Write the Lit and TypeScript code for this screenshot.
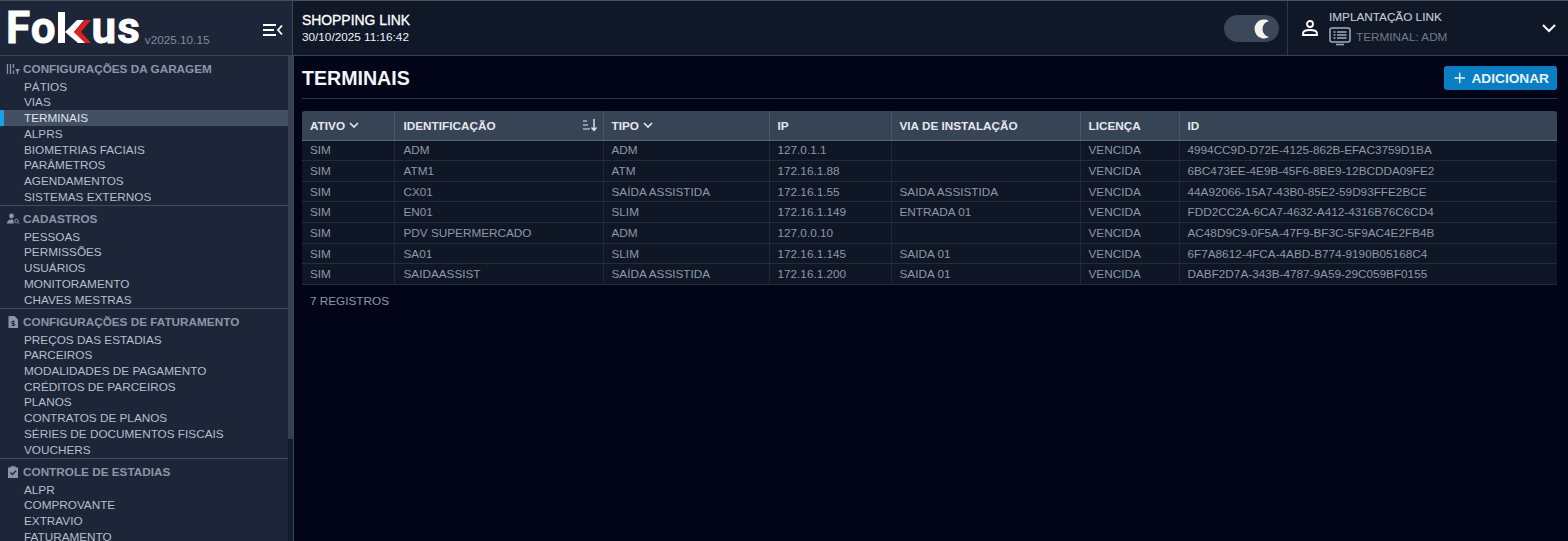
import { LitElement, html, css, svg } from "lit";
import { customElement } from "lit/decorators.js";

const chevron = html`<svg class="chev" viewBox="0 0 12 12" width="12" height="12"><path d="M2 4l4 4 4-4" fill="none" stroke="currentColor" stroke-width="1.6"/></svg>`;

const sections = [
  { title: "CONFIGURAÇÕES DA GARAGEM", icon: "tune", items: ["PÁTIOS", "VIAS", "TERMINAIS", "ALPRS", "BIOMETRIAS FACIAIS", "PARÂMETROS", "AGENDAMENTOS", "SISTEMAS EXTERNOS"] },
  { title: "CADASTROS", icon: "people", items: ["PESSOAS", "PERMISSÕES", "USUÁRIOS", "MONITORAMENTO", "CHAVES MESTRAS"] },
  { title: "CONFIGURAÇÕES DE FATURAMENTO", icon: "bill", items: ["PREÇOS DAS ESTADIAS", "PARCEIROS", "MODALIDADES DE PAGAMENTO", "CRÉDITOS DE PARCEIROS", "PLANOS", "CONTRATOS DE PLANOS", "SÉRIES DE DOCUMENTOS FISCAIS", "VOUCHERS"] },
  { title: "CONTROLE DE ESTADIAS", icon: "check", items: ["ALPR", "COMPROVANTE", "EXTRAVIO", "FATURAMENTO"] },
];

const icons: Record<string, unknown> = {
  tune: svg`<path d="M1.500 2v10M4.500 2v10" stroke="currentColor" stroke-width="1.300" fill="none"/><path d="M7.500 2v4M7.500 8.500V12" stroke="currentColor" stroke-width="1.300" fill="none"/><path d="M9 7h5l-2.500 3.500z" fill="currentColor"/><path d="M11.500 9v3" stroke="currentColor" stroke-width="1.300"/>`,
  people: svg`<circle cx="5.500" cy="4" r="2.400" fill="currentColor"/><path d="M1 11.500c0-2.600 2-3.900 4.500-3.900 .8 0 1.300.1 1.800.3-.2 1.200.1 2.600.9 3.600z" fill="currentColor"/><circle cx="10.500" cy="9" r="1.800" fill="none" stroke="currentColor" stroke-width="1"/><path d="M11.800 10.400l1.400 1.400" stroke="currentColor" stroke-width="1"/>`,
  bill: svg`<path d="M2.500 1h6l3.500 3.500V13h-9.500z" fill="currentColor"/><path d="M7.200 5.500v5.500M8.800 6.500H6.500a1 1 0 0 0 0 2h1.400a1 1 0 0 1 0 2H5.600" stroke="#1c2638" stroke-width="1" fill="none"/>`,
  check: svg`<path d="M2 2.500h2.500V1.300h5v1.200H12V13H2z" fill="currentColor"/><path d="M4.500 7.500l2 2 3.500-3.800" stroke="#1c2638" stroke-width="1.300" fill="none"/>`,
};

const rows = [
  ["SIM", "ADM", "ADM", "127.0.1.1", "", "VENCIDA", "4994CC9D-D72E-4125-862B-EFAC3759D1BA"],
  ["SIM", "ATM1", "ATM", "172.16.1.88", "", "VENCIDA", "6BC473EE-4E9B-45F6-8BE9-12BCDDA09FE2"],
  ["SIM", "CX01", "SAÍDA ASSISTIDA", "172.16.1.55", "SAIDA ASSISTIDA", "VENCIDA", "44A92066-15A7-43B0-85E2-59D93FFE2BCE"],
  ["SIM", "EN01", "SLIM", "172.16.1.149", "ENTRADA 01", "VENCIDA", "FDD2CC2A-6CA7-4632-A412-4316B76C6CD4"],
  ["SIM", "PDV SUPERMERCADO", "ADM", "127.0.0.10", "", "VENCIDA", "AC48D9C9-0F5A-47F9-BF3C-5F9AC4E2FB4B"],
  ["SIM", "SA01", "SLIM", "172.16.1.145", "SAIDA 01", "VENCIDA", "6F7A8612-4FCA-4ABD-B774-9190B05168C4"],
  ["SIM", "SAIDAASSIST", "SAÍDA ASSISTIDA", "172.16.1.200", "SAIDA 01", "VENCIDA", "DABF2D7A-343B-4787-9A59-29C059BF0155"],
];

@customElement("app-root")
export class AppRoot extends LitElement {
  static styles = css`
    :host { display: block; width: 1568px; height: 541px; overflow: hidden; background: #020518; font-family: "Liberation Sans", Arial, sans-serif; font-size: 11.76px; color: #a3aebd; }
    .top { display: flex; height: 56px; box-sizing: border-box; background: #101828; border-top: 1px solid #4a515c; border-bottom: 1px solid #3a424f; }
    .brand { width: 293px; flex: none; box-sizing: border-box; background: #1c2638; border-right: 1px solid #3c4655; display: flex; align-items: flex-start; padding: 5px 10px 0 6px; }
    .logo { display: flex; align-items: flex-start; color: #fff; font-family: Roboto, sans-serif; font-weight: 700; font-size: 44px; line-height: 44px; height: 44px; letter-spacing: 1px; -webkit-text-stroke: .8px #fff; }
    .logo svg { flex: none; margin-top: 6px; }
    .ver { color: #7f8a9a; font-size: 11.76px; margin: 27px 0 0 4px; }
    .menu { margin-left: auto; margin-top: 16px; margin-right: -1px; color: #fff; }
    .head-mid { flex: 1; box-sizing: border-box; padding: 11px 9px; color: #fff; display: flex; justify-content: space-between; align-items: flex-start; }
    .head-title { font-size: 13.9px; line-height: 16px; -webkit-text-stroke: .3px #fff; }
    .head-date { font-size: 11.76px; line-height: 15px; margin-top: 1px; color: #eef1f5; }
    .toggle { width: 55px; height: 27px; margin: 3px -1px 0 0; border-radius: 14px; background: #3b4658; display: flex; align-items: center; justify-content: flex-end; padding-right: 9px; box-sizing: border-box; }
    .user { width: 281px; flex: none; box-sizing: border-box; border-left: 1px solid #2e3643; display: flex; align-items: flex-start; padding: 9px 0 0 13px; }
    .user-ico { margin: 9px 10px 0 0; color: #fff; flex: none; }
    .user-name { color: #c6ccd5; line-height: 14px; -webkit-text-stroke: .1px; }
    .user-term { display: flex; align-items: center; gap: 5px; color: #717a88; line-height: 16px; margin-top: 3px; }
    .user-term svg { color: #a3aebd; }
    .user-chev { margin: 11px 0 0 auto; padding-right: 5px; color: #fff; }
    .body { display: flex; height: 485px; }
    .side { width: 294px; flex: none; display: flex; box-sizing: border-box; border-right: 1px solid #3c4655; background: #1c2638; overflow: hidden; }
    .nav { width: 288px; flex: none; }
    .scroll { width: 5px; flex: none; background: #141d2d; }
    .thumb { height: 383px; background: #343f53; }
    .sec { border-bottom: 1px solid #3f4a5b; padding: 5.3px 0 .7px; box-sizing: border-box; }
    .sec-h { display: flex; align-items: center; height: 15px; font-weight: 700; color: #8a96a8; padding-left: 6px; gap: 3px; margin-bottom: 2.5px; }
    .sec-h svg { flex: none; color: #8a96a8; }
    .item { height: 15.7px; line-height: 15.7px; padding-left: 24px; color: #b5bfcc; position: relative; }
    .item.on { background: #434f62; color: #dfe4ea; }
    .item.on::before { content: ""; position: absolute; left: 0; top: 0; bottom: 0; width: 4px; background: #14a3e8; }
    .main { flex: 1; padding: 0 11px 0 8px; min-width: 0; }
    .bar { display: flex; justify-content: space-between; align-items: flex-start; height: 43px; box-sizing: border-box; border-bottom: 1px solid #2e3645; }
    h1 { margin: 11px 0 0; font-size: 19.6px; line-height: 23px; font-weight: 700; color: #f3f5f8; }
    .add { margin-top: 10px; height: 24px; width: 113px; box-sizing: border-box; border: 0; border-radius: 3px; background: #0a7ec2; color: #e8f3fa; font: 700 13.7px "Liberation Sans", sans-serif; display: flex; align-items: center; gap: 6px; padding: 0 8px 0 10px; white-space: nowrap; }
    table { width: 100%; margin-top: 12px; border-collapse: collapse; table-layout: fixed; }
    th { height: 29px; box-sizing: border-box; background: #374456; color: #e4e8ee; font-size: 11.76px; font-weight: 700; text-align: left; padding: 0 8px; border-left: 1px solid #4c5869; border-bottom: 1px solid #5a6576; }
    th:first-child, td:first-child { border-left: 0; }
    th:nth-child(2), td:nth-child(2) { padding-left: 9px; }
    thead tr th:first-child { border-top-left-radius: 3px; }
    thead tr th:last-child { border-top-right-radius: 3px; }
    .th-in { display: flex; align-items: center; gap: 3px; }
    .sort { margin-left: auto; margin-right: -3px; }
    td { height: 20.67px; box-sizing: border-box; padding: 0 8px; background: #0f1726; color: #8e98a7; border-left: 1px solid #1f2836; border-bottom: 1px solid #232c3a; line-height: 14px; white-space: nowrap; }
    .count { margin: 9px 0 0 8px; color: #8e98a7; line-height: 14px; }
  `;

  render() {
    return html`
      <div class="top">
        <div class="brand">
          <div class="logo" aria-label="Fokus">
            <span>Fo</span>
            <svg width="35" height="32" viewBox="0 0 35 32">
              <path d="M1 0h7v31H1z" fill="#fff"/>
              <path d="M8 20L20 8h7L17 20l12 11h-8z" fill="#fff"/>
              <path d="M17 20L28 8h6L24 20l10 11h-6z" fill="#e0201f"/>
            </svg>
            <span>us</span>
          </div>
          <span class="ver">v2025.10.15</span>
          <svg class="menu" width="20" height="16" viewBox="0 0 20 16"><path d="M0 3h13M0 8h11M0 13h13" stroke="currentColor" stroke-width="2"/><path d="M19 3.500L15 8l4 4.500" fill="none" stroke="currentColor" stroke-width="1.800"/></svg>
        </div>
        <div class="head-mid">
          <div>
            <div class="head-title">SHOPPING LINK</div>
            <div class="head-date">30/10/2025 11:16:42</div>
          </div>
          <div class="toggle">
            <svg width="16" height="20" viewBox="0 0 16 20"><path d="M15 1.900A9.500 9.500 0 1 0 15 18.100 8.300 8.300 0 0 1 15 1.900z" fill="#f5f3e9"/></svg>
          </div>
        </div>
        <div class="user">
          <svg class="user-ico" width="18" height="18" viewBox="0 0 18 18"><circle cx="9" cy="5" r="3" fill="none" stroke="currentColor" stroke-width="1.800"/><path d="M2 16v-1.500C2 12 6 11 9 11s7 1 7 3.500V16z" fill="none" stroke="currentColor" stroke-width="1.800"/></svg>
          <div>
            <div class="user-name">IMPLANTAÇÃO LINK</div>
            <div class="user-term">
              <svg width="22" height="19" viewBox="0 0 22 19"><rect x="1" y="1" width="20" height="14" rx="2" fill="none" stroke="currentColor" stroke-width="1.500"/><path d="M4.500 5h2M8 5h9.500M4.500 8h2M8 8h9.500M4.500 11h2M8 11h9.500M7 17.500h8" stroke="currentColor" stroke-width="1.300"/></svg>
              <span>TERMINAL: ADM</span>
            </div>
          </div>
          <svg class="user-chev" width="24" height="16" viewBox="0 0 24 16"><path d="M4 4l6 6 6-6" fill="none" stroke="currentColor" stroke-width="2"/></svg>
        </div>
      </div>
      <div class="body">
        <aside class="side">
          <nav class="nav">
            ${sections.map((s) => html`
              <div class="sec">
                <div class="sec-h"><svg width="14" height="14" viewBox="0 0 14 14">${icons[s.icon]}</svg><span>${s.title}</span></div>
                ${s.items.map((i) => html`<div class="item ${i === "TERMINAIS" ? "on" : ""}">${i}</div>`)}
              </div>`)}
          </nav>
          <div class="scroll"><div class="thumb"></div></div>
        </aside>
        <main class="main">
          <div class="bar">
            <h1>TERMINAIS</h1>
            <button class="add"><svg width="12" height="12" viewBox="0 0 12 12"><path d="M6 .5v11M.5 6h11" stroke="currentColor" stroke-width="1.500"/></svg>ADICIONAR</button>
          </div>
          <table>
            <colgroup><col style="width:92px"/><col style="width:209px"/><col style="width:166px"/><col style="width:122px"/><col style="width:189px"/><col style="width:99px"/><col/></colgroup>
            <thead><tr>
              <th><div class="th-in">ATIVO ${chevron}</div></th>
              <th><div class="th-in">IDENTIFICAÇÃO <svg class="sort" width="16" height="14" viewBox="0 0 16 14"><path d="M1 3h4M1 7h5M1 11h7" stroke="currentColor" stroke-width="1"/><path d="M12 1v11M9.500 9.500L12 12.500l2.500-3" fill="none" stroke="currentColor" stroke-width="1.400"/></svg></div></th>
              <th><div class="th-in">TIPO ${chevron}</div></th>
              <th>IP</th><th>VIA DE INSTALAÇÃO</th><th>LICENÇA</th><th>ID</th>
            </tr></thead>
            <tbody>${rows.map((r) => html`<tr>${r.map((c) => html`<td>${c}</td>`)}</tr>`)}</tbody>
          </table>
          <div class="count">7 REGISTROS</div>
        </main>
      </div>
    `;
  }
}
